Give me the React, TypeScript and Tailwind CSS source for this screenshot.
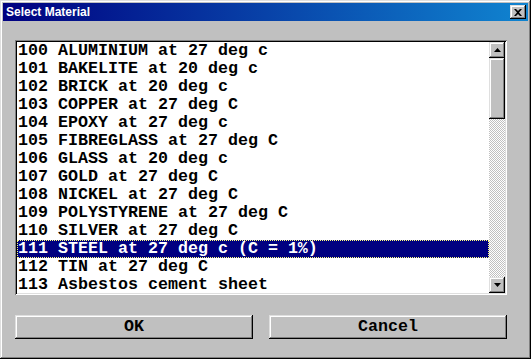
import React, { useState } from 'react';

const materials = [
  '100 ALUMINIUM at 27 deg c',
  '101 BAKELITE at 20 deg c',
  '102 BRICK at 20 deg c',
  '103 COPPER at 27 deg C',
  '104 EPOXY at 27 deg c',
  '105 FIBREGLASS at 27 deg C',
  '106 GLASS at 20 deg c',
  '107 GOLD at 27 deg C',
  '108 NICKEL at 27 deg C',
  '109 POLYSTYRENE at 27 deg C',
  '110 SILVER at 27 deg C',
  '111 STEEL at 27 deg c (C = 1%)',
  '112 TIN at 27 deg C',
  '113 Asbestos cement sheet',
];

// classic raised / sunken bevels
const raised =
  'shadow-[inset_-1px_-1px_#000,inset_1px_1px_#dfdfdf,inset_-2px_-2px_#808080,inset_2px_2px_#fff]';
const sunken =
  'shadow-[inset_1px_1px_#808080,inset_-1px_-1px_#fff,inset_2px_2px_#000,inset_-2px_-2px_#dfdfdf]';

const Arrow: React.FC<{ up?: boolean }> = ({ up }) => (
  <svg width="7" height="4" viewBox="0 0 7 4" className={up ? '' : 'rotate-180'}>
    <path d="M3.5 0 L7 4 L0 4 Z" fill="#000" />
  </svg>
);

const App: React.FC = () => {
  const [selected, setSelected] = useState(11);

  return (
    <div
      className={`w-[531px] h-[359px] bg-[#c0c0c0] p-[3px] flex flex-col ${raised}`}
      style={{ fontFamily: '"Liberation Mono", "Courier New", monospace' }}
    >
      {/* Title bar */}
      <div className="h-[18px] flex items-center justify-between pl-[3px] pr-[2px] bg-[linear-gradient(to_right,#000080,#1084d0)]">
        <span className="text-white text-[12px] font-bold font-['Liberation_Sans',sans-serif] leading-none">
          Select Material
        </span>
        <button className={`w-[16px] h-[14px] bg-[#c0c0c0] flex items-center justify-center ${raised}`}>
          <svg width="8" height="7" viewBox="0 0 8 7">
            <path d="M0 0h2l2 2 2-2h2L5 3.5 8 7H6L4 5 2 7H0l3-3.5z" fill="#000" />
          </svg>
        </button>
      </div>

      <div className="pl-[12px] pt-[19px]">
        {/* List box */}
        <div className={`w-[492px] h-[255px] bg-white p-[2px] flex ${sunken}`}>
          <div className="flex-1 overflow-hidden">
            {materials.map((m, i) => (
              <div
                key={m}
                onClick={() => setSelected(i)}
                className={`h-[18px] pl-[1px] text-[16.67px] leading-[18px] font-bold whitespace-pre ${
                  i === selected
                    ? 'bg-[#000080] text-white outline-1 outline-dotted outline-[#ffff80] -outline-offset-1'
                    : 'text-black'
                }`}
              >
                {m}
              </div>
            ))}
          </div>

          {/* Scrollbar */}
          <div className="w-[16px] flex flex-col bg-[repeating-conic-gradient(#c0c0c0_0_25%,#fff_0_50%)] bg-[length:2px_2px]">
            <div className={`h-[16px] bg-[#c0c0c0] flex items-center justify-center ${raised}`}>
              <Arrow up />
            </div>
            <div className={`h-[61px] bg-[#c0c0c0] ${raised}`} />
            <div className="flex-1" />
            <div className={`h-[16px] bg-[#c0c0c0] flex items-center justify-center ${raised}`}>
              <Arrow />
            </div>
          </div>
        </div>

        {/* Buttons */}
        <div className="flex gap-[16px] mt-[20px]">
          <button
            className={`w-[238px] h-[24px] bg-[#c0c0c0] text-black font-bold text-[16.67px] leading-none ${raised}`}
          >
            OK
          </button>
          <button
            className={`w-[238px] h-[24px] bg-[#c0c0c0] text-black font-bold text-[16.67px] leading-none ${raised}`}
          >
            Cancel
          </button>
        </div>
      </div>
    </div>
  );
};

export default App;
